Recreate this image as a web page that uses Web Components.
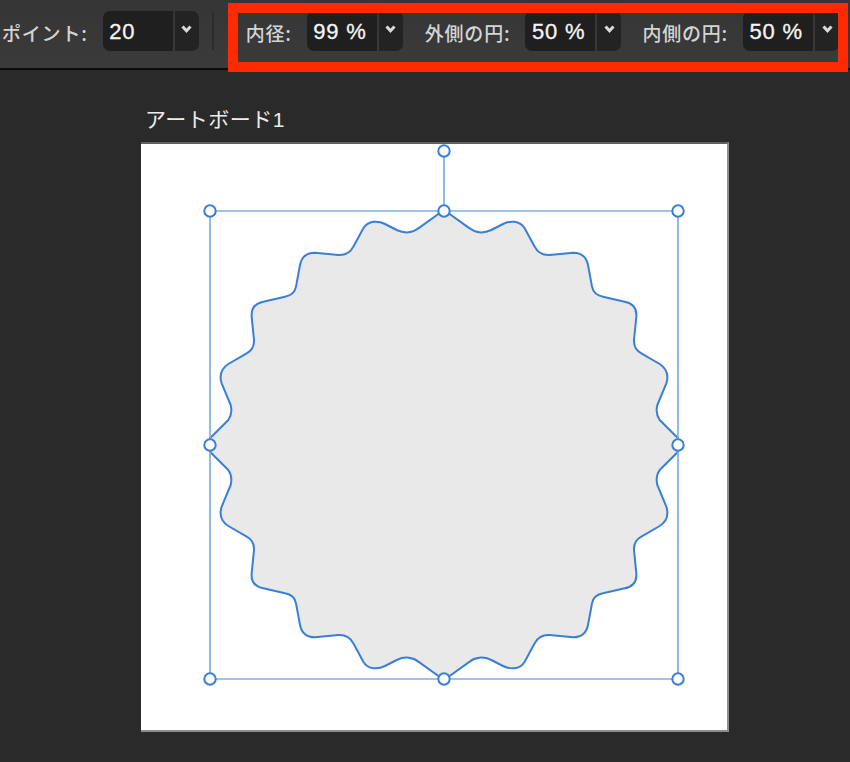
<!DOCTYPE html>
<html lang="ja"><head><meta charset="utf-8"><title>Star</title>
<style>
html,body{margin:0;padding:0;background:#2a2a2a;height:100%;overflow:hidden}
body{width:850px;height:762px;display:flex;flex-direction:column;font-family:"Liberation Sans","Noto Sans CJK JP",sans-serif}
</style></head><body>
<app-toolbar>
  <num-field label="ポイント:" value="20" style="margin-left:2px"></num-field>
  <tool-sep></tool-sep>
  <num-field label="内径:" value="99 %" style="margin-left:32px"></num-field>
  <num-field label="外側の円:" value="50 %" style="margin-left:22px"></num-field>
  <num-field label="内側の円:" value="50 %" style="margin-left:21px"></num-field>
</app-toolbar>
<art-board title-text="アートボード1"><star-shape></star-shape></art-board>
<script>
class AppToolbar extends HTMLElement{constructor(){super();this.attachShadow({mode:'open'}).innerHTML=`<style>
:host{display:flex;align-items:flex-start;position:relative;box-sizing:border-box;height:70px;flex:none;padding-top:11px;background:linear-gradient(#353535,#3b3b3b);border-bottom:2px solid #0c0c0c}
.mark{position:absolute;left:228px;top:3px;width:620px;height:69px;box-sizing:border-box;border:10px solid #ff2a00;pointer-events:none}
</style><slot></slot><div class="mark"></div>`}}
class ToolSep extends HTMLElement{constructor(){super();this.attachShadow({mode:'open'}).innerHTML=`<style>
:host{display:block;width:2px;height:38px;margin:1px 0 0 13px;background:#2c2c2c}</style>`}}
class NumField extends HTMLElement{constructor(){super();const l=this.getAttribute('label'),v=this.getAttribute('value');this.attachShadow({mode:'open'}).innerHTML=`<style>
:host{display:flex;align-items:flex-start}
.l{font:500 19px/44px "Noto Sans CJK JP",sans-serif;color:#d4d4d4;letter-spacing:.8px;margin-right:15px;white-space:nowrap;height:44px}
.b{display:flex;gap:2px;height:40px}
.v{width:70px;box-sizing:border-box;padding-left:6.5px;background:#1f1f1f;border-radius:7px 0 0 7px;font:22px/42px "Liberation Sans",sans-serif;letter-spacing:.8px;-webkit-text-stroke:.3px #f4f4f4;color:#f4f4f4;white-space:pre}
.d{width:24px;background:#232323;border-radius:0 7px 7px 0;display:flex;justify-content:center;padding-top:14px;box-sizing:border-box}
svg{display:block}
</style><span class="l">${l}</span><div class="b"><div class="v">${v}</div><div class="d"><svg width="11" height="9" viewBox="0 0 11 9"><path d="M1.5 1.5 5.5 5.8 9.5 1.5" fill="none" stroke="#dadada" stroke-width="3"/></svg></div></div>`}}
class ArtBoard extends HTMLElement{constructor(){super();this.attachShadow({mode:'open'}).innerHTML=`<style>
:host{display:block;flex:1;padding:36px 0 0 141px}
.t{font:21px/28px "Liberation Sans","Noto Sans CJK JP",sans-serif;color:#ececec;letter-spacing:.5px;padding-left:4px;height:36px;box-sizing:border-box;white-space:nowrap}
.a{width:586px;height:586px;box-sizing:content-box;background:#fff;border-top:2px solid #606060;border-right:2px solid #8e8e8e;border-bottom:2px solid #8e8e8e}
</style><div class="t">${this.getAttribute('title-text')}</div><div class="a"><slot></slot></div>`}}
class StarShape extends HTMLElement{constructor(){super();
 const q=[['L',655,265],['C',640,278,615,282,590,270],['L',555,252],['C',535,242,505,240,490,265],['L',460,320],['C',450,340,435,346,415,345],['L',345,338],['C',320,338,305,350,300,375],['L',288,440],['C',284,460,272,467,255,470],['L',190,485],['C',165,490,153,505,155,530],['L',162,600],['C',163,620,155,632,140,640],['L',85,672],['C',65,685,57,705,65,730],['L',92,795],['C',97,815,92,830,85,840],['L',30,895]];
 const start=[732,210];
 const cx=732,cy=915;
 const rel=(x,y)=>[(x-cx)/3,(y-cy)/3];
 const S=s=>{const o=[];for(let i=1;i<s.length;i+=2)o.push(rel(s[i],s[i+1]));return o};
 const segs=q.map(s=>({t:s[0],p:S(s)}));
 const st=rel(...start);
 const fmt=(x,y)=>`${(303+x).toFixed(2)} ${(301+y).toFixed(2)}`;
 let d='M'+fmt(st[0],st[1]);
 const fwd=(sx,sy)=>{for(const s of segs){d+=s.t+s.p.map(p=>fmt(p[0]*sx,p[1]*sy)).join(' ')}};
 const rev=(sx,sy)=>{const anchors=[st];for(const s of segs)anchors.push(s.p[s.p.length-1]);
  for(let i=segs.length-1;i>=0;i--){const s=segs[i],a=anchors[i];
   if(s.t==='L')d+='L'+fmt(a[0]*sx,a[1]*sy);
   else d+='C'+fmt(s.p[1][0]*sx,s.p[1][1]*sy)+' '+fmt(s.p[0][0]*sx,s.p[0][1]*sy)+' '+fmt(a[0]*sx,a[1]*sy);}};
 const last=segs[segs.length-1].p[0];
 fwd(1,1);
 d+='L'+fmt(last[0],-last[1]);
 rev(1,-1);
 d+='L'+fmt(-st[0],-st[1]);
 fwd(-1,-1);
 d+='L'+fmt(-last[0],last[1]);
 rev(-1,1);
 d+='Z';
 const h=[[69,67],[303,67],[537,67],[69,301],[537,301],[69,535],[303,535],[537,535],[303,7]];
 this.attachShadow({mode:'open'}).innerHTML=`<style>:host{display:block;width:586px;height:586px}svg{display:block}</style>
 <svg width="586" height="586" viewBox="0 0 586 586">
 <path d="${d}" fill="#e9e9ea" stroke="#3a7fd6" stroke-width="2" stroke-linejoin="round"/>
 <path d="M69 67H537V535H69ZM303 7V67" fill="none" stroke="#7fb0e4" stroke-width="1.7"/>
 ${h.map(p=>`<circle cx="${p[0]}" cy="${p[1]}" r="5.7" fill="#fff" stroke="#3a7fd6" stroke-width="2"/>`).join('')}
 </svg>`}}
customElements.define('app-toolbar',AppToolbar);
customElements.define('tool-sep',ToolSep);
customElements.define('num-field',NumField);
customElements.define('art-board',ArtBoard);
customElements.define('star-shape',StarShape);
</script>
</body></html>
